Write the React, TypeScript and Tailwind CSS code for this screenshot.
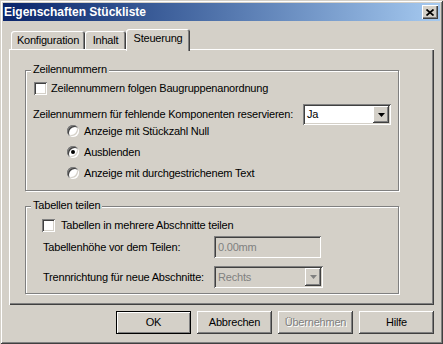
import React from 'react'

const raised =
  'shadow-[inset_-1px_-1px_0_#404040,inset_1px_1px_0_#fff,inset_-2px_-2px_0_#808080,inset_2px_2px_0_#d4d0c8]'
const sunken =
  'shadow-[inset_1px_1px_0_#808080,inset_-1px_-1px_0_#fff,inset_2px_2px_0_#404040,inset_-2px_-2px_0_#d4d0c8]'
const etched = 'border border-[#808080] shadow-[inset_1px_1px_0_#fff,1px_1px_0_#fff]'
const tabEdge = 'shadow-[inset_1px_1px_0_#fff,inset_-1px_0_0_#404040,inset_-2px_0_0_#808080]'

function Checkbox() {
  return <div className={`w-[13px] h-[13px] shrink-0 bg-white ${sunken}`} />
}

function Radio({ checked }: { checked?: boolean }) {
  return (
    <div className={`w-[12px] h-[12px] shrink-0 rounded-full bg-white flex items-center justify-center ${sunken}`}>
      {checked && <div className="w-[4px] h-[4px] rounded-full bg-black" />}
    </div>
  )
}

function Arrow({ color }: { color: string }) {
  return (
    <svg width="7" height="4" viewBox="0 0 7 4">
      <polygon points="0,0 7,0 3.5,4" fill={color} />
    </svg>
  )
}

function Dropdown({ value, className, disabled }: { value: string; className: string; disabled?: boolean }) {
  return (
    <div
      className={`${className} flex items-stretch p-[2px] ${sunken} ${
        disabled ? 'bg-[#d4d0c8] text-[#808080]' : 'bg-white'
      }`}
    >
      <span className="flex-1 flex items-center pl-[2px]">{value}</span>
      <div className={`w-[16px] flex items-center justify-center bg-[#d4d0c8] ${raised}`}>
        <Arrow color={disabled ? '#808080' : '#000'} />
      </div>
    </div>
  )
}

function Tab({ label, className, active }: { label: string; className: string; active?: boolean }) {
  if (active) {
    return (
      <div
        className={`${className} relative h-[22px] -mb-[2px] bg-[#d4d0c8] rounded-t-[3px] flex items-center justify-center pb-[4px] ${tabEdge}`}
      >
        {label}
      </div>
    )
  }
  return (
    <div className={`${className} h-[18px] rounded-t-[3px] flex items-center justify-center ${tabEdge}`}>
      {label}
    </div>
  )
}

function Button({ label, isDefault, disabled }: { label: string; isDefault?: boolean; disabled?: boolean }) {
  if (isDefault) {
    return (
      <div className="w-[75px] h-[23px] border border-black flex items-center justify-center shadow-[inset_1px_1px_0_#fff,inset_-1px_-1px_0_#808080]">
        {label}
      </div>
    )
  }
  return (
    <div
      className={`w-[75px] h-[23px] flex items-center justify-center ${raised} ${
        disabled ? 'text-[#808080] [text-shadow:1px_1px_0_#fff]' : ''
      }`}
    >
      {label}
    </div>
  )
}

export default function App() {
  return (
    <div className="w-[443px] h-[344px] bg-[#d4d0c8] p-[3px] flex flex-col whitespace-nowrap font-['Liberation_Sans',Arial,sans-serif] text-[11px] leading-[13px] tracking-[-0.2px] text-black shadow-[inset_1px_1px_0_#d4d0c8,inset_-1px_-1px_0_#404040,inset_2px_2px_0_#fff,inset_-2px_-2px_0_#808080]">
      {/* title bar */}
      <div className="h-[18px] shrink-0 flex items-center justify-between pl-[1px] pr-[2px] bg-gradient-to-r from-[#0a246a] to-[#a6caf0]">
        <span className="text-white font-bold text-[12px] tracking-normal">Eigenschaften Stückliste</span>
        <div className="w-[16px] h-[14px] bg-[#d4d0c8] flex items-center justify-center shadow-[inset_1px_1px_0_#fff,inset_-1px_-1px_0_#404040,inset_-2px_-2px_0_#808080]">
          <svg width="8" height="7" viewBox="0 0 8 7">
            <path d="M0.5 0.5 L7.5 6.5 M7.5 0.5 L0.5 6.5" stroke="#000" strokeWidth="1.7" />
          </svg>
        </div>
      </div>

      {/* tabs + panel */}
      <div className="mx-[6px] mt-[8px] flex flex-col">
        <div className="relative z-10 h-[20px] flex items-end pl-[2px]">
          <Tab label="Konfiguration" className="w-[74px]" />
          <Tab label="Inhalt" className="w-[41px]" />
          <Tab label="Steuerung" className="w-[64px]" active />
        </div>

        <div className="h-[256px] pt-[21px] pl-[16px] flex flex-col shadow-[inset_1px_1px_0_#fff,inset_-1px_-1px_0_#404040,inset_-2px_-2px_0_#808080]">
          {/* Zeilennummern */}
          <div className={`relative w-[374px] h-[121px] ${etched} pt-[11px] px-[7px] flex flex-col`}>
            <span className="absolute left-[5px] -top-[8px] px-[2px] bg-[#d4d0c8]">Zeilennummern</span>
            <div className="h-[13px] ml-[1px] flex items-center">
              <Checkbox />
              <span className="ml-[4px]">Zeilennummern folgen Baugruppenanordnung</span>
            </div>
            <div className="mt-[9px] h-[21px] flex items-center justify-between">
              <span>Zeilennummern für fehlende Komponenten reservieren:</span>
              <Dropdown value="Ja" className="w-[88px] h-[21px]" />
            </div>
            <div className="pl-[34px] flex flex-col gap-[9px]">
              <div className="h-[12px] flex items-center">
                <Radio />
                <span className="ml-[5px]">Anzeige mit Stückzahl Null</span>
              </div>
              <div className="h-[12px] flex items-center">
                <Radio checked />
                <span className="ml-[5px]">Ausblenden</span>
              </div>
              <div className="h-[12px] flex items-center">
                <Radio />
                <span className="ml-[5px]">Anzeige mit durchgestrichenem Text</span>
              </div>
            </div>
          </div>

          {/* Tabellen teilen */}
          <div className={`relative mt-[15px] w-[374px] h-[88px] ${etched} pt-[12px] pl-[16px] flex flex-col`}>
            <span className="absolute left-[5px] -top-[8px] px-[2px] bg-[#d4d0c8]">Tabellen teilen</span>
            <div className="h-[13px] flex items-center">
              <Checkbox />
              <span className="ml-[6px]">Tabellen in mehrere Abschnitte teilen</span>
            </div>
            <div className="mt-[4px] h-[22px] flex items-center">
              <span className="w-[172px] pl-[1px]">Tabellenhöhe vor dem Teilen:</span>
              <div className={`w-[107px] h-[22px] pl-[4px] flex items-center bg-[#d4d0c8] text-[#808080] ${sunken}`}>
                0.00mm
              </div>
            </div>
            <div className="mt-[8px] h-[22px] flex items-center">
              <span className="w-[172px] pl-[1px]">Trennrichtung für neue Abschnitte:</span>
              <Dropdown value="Rechts" className="w-[109px] h-[22px]" disabled />
            </div>
          </div>
        </div>
      </div>

      {/* buttons */}
      <div className="mt-[6px] pr-[6px] flex justify-end gap-[6px]">
        <Button label="OK" isDefault />
        <Button label="Abbrechen" />
        <Button label="Übernehmen" disabled />
        <Button label="Hilfe" />
      </div>
    </div>
  )
}
